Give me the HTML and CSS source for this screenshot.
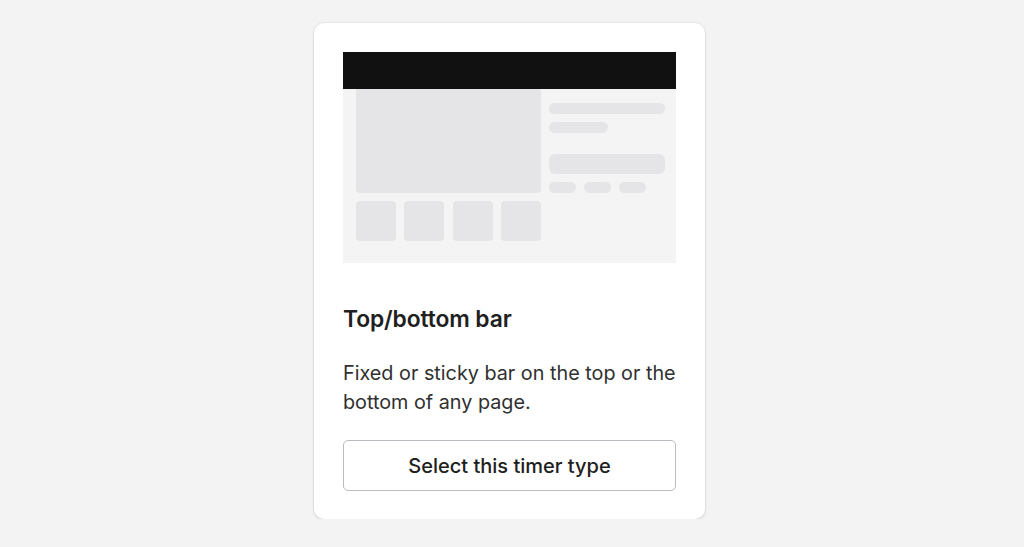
FILE: index.html
```html
<!DOCTYPE html>
<html lang="en">
<head>
    <meta charset="UTF-8">
    <meta name="viewport" content="width=device-width, initial-scale=1.0">
    <title>Timer type</title>
    <link rel="stylesheet" href="styles.css">
</head>
<body>

    <div class="page">
        <div class="card">
            <!-- Vista previa del tipo de temporizador -->
            <div class="preview">
                <div class="preview-bar"></div>
                <div class="preview-body">
                    <div class="preview-left">
                        <div class="preview-image"></div>
                        <div class="preview-thumbs">
                            <div class="thumb"></div>
                            <div class="thumb"></div>
                            <div class="thumb"></div>
                            <div class="thumb"></div>
                        </div>
                    </div>
                    <div class="preview-right">
                        <div class="line line-full"></div>
                        <div class="line line-half"></div>
                        <div class="line line-button"></div>
                        <div class="pills">
                            <div class="pill"></div>
                            <div class="pill"></div>
                            <div class="pill"></div>
                        </div>
                    </div>
                </div>
            </div>

            <h2 class="card-title">Top/bottom bar</h2>
            <p class="card-text">Fixed or sticky bar on the top or the bottom of any page.</p>
            <button class="select-button">Select this timer type</button>
        </div>
    </div>

</body>
</html>
```

FILE: styles.css
```css
body {
    margin: 0;
    background-color: #f3f3f3;
    font-family: 'Inter', 'Noto Sans', sans-serif;
    color: #222;
}
.page {
    display: flex;
    padding: 23px 0 0 314px;
}
.card {
    width: 333px;
    background-color: #fff;
    border-radius: 10px;
    padding: 29px 29px 28px;
    box-shadow: 0 0 0 1px rgba(0, 0, 0, 0.03), 0 1px 3px rgba(0, 0, 0, 0.12);
}
.preview {
    background-color: #f4f4f4;
    height: 211px;
}
.preview-bar {
    height: 37px;
    background-color: #111;
}
.preview-body {
    display: flex;
    gap: 8px;
    padding: 0 11px 0 13px;
}
.preview-left {
    width: 185px;
    display: flex;
    flex-direction: column;
    gap: 8px;
}
.preview-image {
    height: 104px;
    background-color: #e5e5e7;
    border-radius: 0 0 4px 4px;
}
.preview-thumbs {
    display: flex;
    gap: 8.3px;
}
.thumb {
    width: 40px;
    height: 40px;
    background-color: #e5e5e7;
    border-radius: 4px;
}
.preview-right {
    flex: 1;
    padding-top: 14px;
}
.line {
    height: 11px;
    background-color: #e5e5e7;
    border-radius: 6px;
    margin-bottom: 8px;
}
.line-half {
    width: 59px;
    margin-bottom: 21px;
}
.line-button {
    height: 20px;
}
.pills {
    display: flex;
    gap: 8px;
}
.pill {
    width: 27px;
    height: 11px;
    background-color: #e5e5e7;
    border-radius: 6px;
}
.card-title {
    margin: 41px 0 0;
    font-size: 22.8px;
    font-weight: 600;
    line-height: 30px;
    letter-spacing: -0.1px;
    color: #202020;
}
.card-text {
    margin: 25px 0 0;
    font-size: 19.8px;
    line-height: 29px;
    color: #303030;
}
.select-button {
    display: block;
    width: 100%;
    height: 51px;
    margin-top: 23px;
    background-color: #fff;
    border: 1px solid #b9bcc0;
    border-radius: 5px;
    font-family: inherit;
    font-size: 20px;
    font-weight: 500;
    color: #202020;
    cursor: pointer;
}
```
